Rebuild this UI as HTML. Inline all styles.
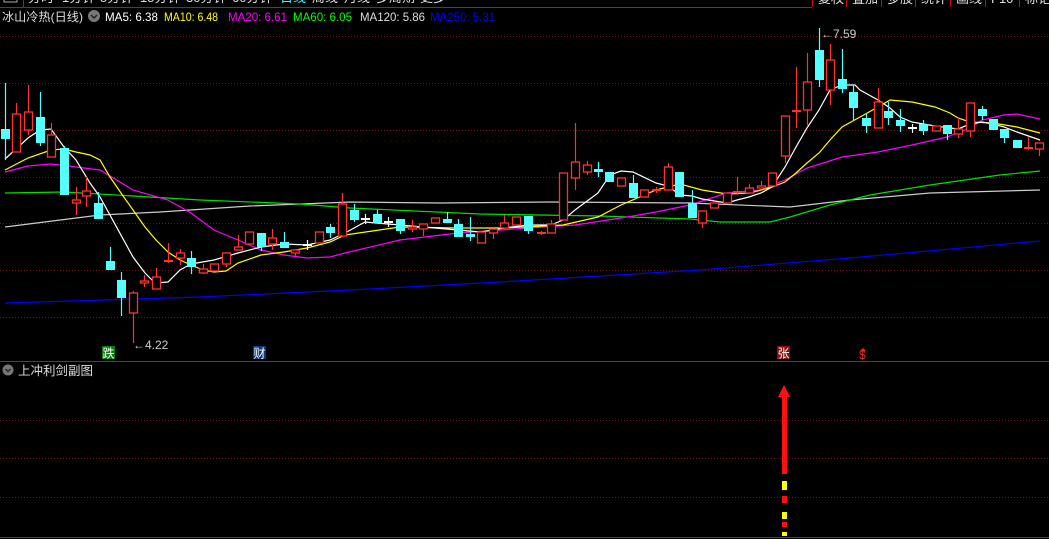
<!DOCTYPE html>
<html><head><meta charset="utf-8">
<style>
html,body{margin:0;padding:0;background:#000;width:1049px;height:539px;overflow:hidden}
svg{display:block}
text{font-family:"Liberation Sans","Noto Sans CJK SC",sans-serif}
</style></head>
<body>
<svg id="s" width="1049" height="539" xmlns="http://www.w3.org/2000/svg">
<rect width="1049" height="539" fill="#000"/>
<!-- top bar -->
<line x1="0" y1="7.5" x2="812" y2="7.5" stroke="#c01010" stroke-width="1"/>
<line x1="23.5" y1="0" x2="23.5" y2="7" stroke="#c01010"/>
<rect x="4" y="-4" width="13" height="6" fill="none" stroke="#aaa"/>
<g font-size="13" fill="#ddd">
<text x="28" y="2">分时</text><text x="62" y="2">1分钟</text><text x="100" y="2">5分钟</text><text x="140" y="2">15分钟</text><text x="186" y="2">30分钟</text><text x="232" y="2">60分钟</text>
<text x="280" y="2" fill="#3ff">日线</text><text x="312" y="2">周线</text><text x="344" y="2">月线</text><text x="376" y="2">多周期</text><text x="420" y="2">更多</text>
</g>
<g stroke="#c01010"><line x1="812.5" y1="0" x2="812.5" y2="7"/><line x1="846.5" y1="0" x2="846.5" y2="7"/><line x1="881.5" y1="0" x2="881.5" y2="7"/><line x1="915.5" y1="0" x2="915.5" y2="7"/><line x1="950.5" y1="0" x2="950.5" y2="7"/><line x1="985.5" y1="0" x2="985.5" y2="7"/><line x1="1019.5" y1="0" x2="1019.5" y2="7"/></g>
<g font-size="13" fill="#ddd"><text x="818" y="3">复权</text><text x="852" y="3">叠加</text><text x="887" y="3">多股</text><text x="921" y="3">统计</text><text x="956" y="3">画线</text><text x="991" y="3">F10</text><text x="1025" y="3">标记</text></g>
<!-- header -->
<g font-size="12">
<text x="2" y="21" fill="#ddd" textLength="81" lengthAdjust="spacingAndGlyphs">冰山冷热(日线)</text>
<circle cx="94" cy="16" r="6" fill="#777"/><path d="M91 15l3 3 3-3" stroke="#222" stroke-width="1.5" fill="none"/>
<text x="105" y="21" fill="#fff" textLength="53" lengthAdjust="spacingAndGlyphs">MA5: 6.38</text>
<text x="164" y="21" fill="#ff0" textLength="54" lengthAdjust="spacingAndGlyphs">MA10: 6.48</text>
<text x="228" y="21" fill="#f0f" textLength="59" lengthAdjust="spacingAndGlyphs">MA20: 6.61</text>
<text x="293" y="21" fill="#0f0" textLength="59" lengthAdjust="spacingAndGlyphs">MA60: 6.05</text>
<text x="360" y="21" fill="#ddd" textLength="65" lengthAdjust="spacingAndGlyphs">MA120: 5.86</text>
<text x="430" y="21" fill="#00f" textLength="65" lengthAdjust="spacingAndGlyphs">MA250: 5.31</text>
</g>
<!-- grid -->
<g stroke="#7a1212" stroke-dasharray="1 2" stroke-width="1">
<line x1="0" y1="36.5" x2="1049" y2="36.5"/><line x1="0" y1="83.5" x2="1049" y2="83.5"/><line x1="0" y1="130.5" x2="1049" y2="130.5"/><line x1="0" y1="177.5" x2="1049" y2="177.5"/><line x1="0" y1="223.5" x2="1049" y2="223.5"/><line x1="0" y1="270.5" x2="1049" y2="270.5"/><line x1="0" y1="317.5" x2="1049" y2="317.5"/>
<line x1="0" y1="420.5" x2="1049" y2="420.5"/><line x1="0" y1="458.5" x2="1049" y2="458.5"/><line x1="0" y1="497.5" x2="1049" y2="497.5"/>
</g>
<line x1="0" y1="361.5" x2="1049" y2="361.5" stroke="#c01010"/>
<line x1="0" y1="537.5" x2="1049" y2="537.5" stroke="#c01010"/>
<!-- MAs -->
<g fill="none" stroke-width="1.2">
<polyline stroke="#0000ff" points="5,303 200,297 350,290 500,282 700,270 850,258 1040,241"/>
<polyline stroke="#cccccc" points="5,227 100,215 160,212 250,206 350,202 440,203 550,202 690,203 790,207 850,200 930,193 1040,190"/>
<polyline stroke="#00e000" points="5,193 64,192 133,196 200,200 300,204 350,208 480,214 600,216 690,219 720,222 770,222 790,217 830,205 870,195 930,185 1000,175 1040,171"/>
<polyline stroke="#ff00ff" points="5,172 28,166 51,164 76,167 100,170 133,190 168,200 191,213 214,230 238,240 261,250 284,255 307,258 330,257 345,253 400,240 458,233 528,228 575,225 621,218 656,212 690,205 727,193 761,190 785,180 807,168 842,157 878,152 912,145 947,137 970,128 982,120 1004,115 1017,114 1040,119"/>
<polyline stroke="#ffff00" points="5,170 28,158 51,150 64,149 76,152 90,155 100,160 110,177 121,193 133,210 145,227 156,240 168,252 180,260 191,265 203,270 214,272 226,271 238,263 261,255 284,252 307,248 330,242 345,235 400,227 458,228 504,228 563,225 598,217 621,205 656,190 680,184 702,190 727,194 750,193 772,187 785,182 796,173 807,163 819,153 830,140 842,127 860,117 878,107 890,100 912,102 935,107 950,113 958,118 970,122 993,123 1017,127 1040,133"/>
<polyline stroke="#ffffff" points="5,159 28,138 40,130 51,129 64,147 76,160 90,183 100,197 133,257 145,273 155,283 168,282 180,270 191,264 214,260 238,253 261,247 284,244 307,245 330,240 345,233 365,222 388,224 423,227 458,230 481,232 504,228 528,225 551,225 563,220 575,210 598,193 610,175 621,171 633,172 656,183 668,186 680,195 692,196 702,199 727,203 737,200 749,197 761,193 772,187 785,167 796,147 807,128 819,110 830,90 842,85 855,85 860,90 878,100 890,108 900,117 912,122 935,126 958,129 970,124 982,122 993,124 1004,127 1017,132 1040,140"/>
</g>
<g id="c"></g>
<!-- labels -->
<text x="821" y="38" font-size="12" fill="#ccc">←7.59</text>
<text x="133" y="349" font-size="12" fill="#ccc">←4.22</text>
<rect x="102" y="346" width="13" height="13" fill="#0a7a0a"/><text x="102.5" y="357.5" font-size="12" fill="#fff">跌</text>
<rect x="253" y="346" width="13" height="13" fill="#0c3a78"/><text x="253.5" y="357.5" font-size="12" fill="#fff">财</text>
<rect x="777" y="346" width="13" height="13" fill="#8a0c0c"/><text x="777.5" y="357.5" font-size="12" fill="#fff">张</text>
<text x="859" y="359" font-size="12" fill="#f22">$</text><path d="M860 351l3-3 3 3z" fill="#f22"/>
<!-- sub panel -->
<circle cx="8" cy="370" r="5.5" fill="#777"/><path d="M5.5 369l2.5 2.5 2.5-2.5" stroke="#222" stroke-width="1.4" fill="none"/>
<text x="18" y="375" font-size="12.5" fill="#ddd">上冲利剑副图</text>
<path d="M778 397L784 385L790 397Z" fill="#ff1010"/>
<rect x="782" y="396" width="5" height="78" fill="#ff1010"/>
<rect x="782" y="481" width="5" height="9" fill="#ffff00"/>
<rect x="782" y="496" width="5" height="7" fill="#ff1010"/>
<rect x="782" y="512" width="5" height="7" fill="#ffff00"/>
<rect x="782" y="522" width="5" height="5" fill="#ff1010"/>
<rect x="782" y="532" width="5" height="4" fill="#ffff00"/>
</svg>
<script>
var d=[[5,129,139,83,160,'c'],[16,114,152,103,152,'r'],[28,112,130,85,135,'r'],[40,117,143,92,146,'c'],[51,135,157,123,157,'r'],[64,148,195,146,195,'c'],[76,200,203,187,215,'r'],[86,191,196,177,207,'r'],[98,203,219,192,219,'c'],[110,261,270,247,270,'c'],[121,280,298,272,316,'c'],[133,293,313,291,343,'r'],[144,281,283,275,287,'r'],[156,277,289,268,289,'r'],[168,261,262,243,263,'r'],[180,253,258,249,265,'r'],[191,258,267,251,274,'c'],[203,269,273,264,274,'r'],[214,264,271,264,271,'r'],[226,253,264,253,267,'r'],[238,247,250,235,250,'r'],[249,232,244,232,244,'r'],[261,233,247,233,251,'c'],[272,238,244,229,250,'r'],[284,242,248,232,248,'c'],[295,250,253,250,257,'r'],[307,245,245,240,250,'w'],[319,232,243,232,243,'r'],[330,227,233,224,238,'c'],
[342,204,236,193,236,'r'],[354,210,220,204,222,'c'],[365,219,219,214,224,'w'],[377,214,223,210,223,'c'],[388,222,222,217,227,'w'],[400,219,231,219,234,'c'],[412,227,229,220,232,'r'],[423,224,229,224,236,'r'],[435,218,223,218,223,'r'],[447,219,223,212,223,'c'],[458,224,237,219,237,'c'],[470,234,237,217,241,'c'],[481,232,243,232,243,'r'],[493,229,233,229,239,'r'],[504,223,228,215,228,'r'],[516,217,225,217,225,'r'],[528,216,231,216,234,'c'],[541,233,233,231,235,'r'],[551,224,233,220,233,'r'],[563,173,220,173,220,'r'],[575,162,178,123,190,'r'],[587,165,172,161,175,'r'],[598,169,172,162,177,'c'],[609,172,182,172,182,'c'],[621,178,186,178,186,'r'],[633,183,198,175,198,'c'],[644,190,197,190,197,'r'],[656,190,190,187,193,'r'],[668,167,190,163,190,'r'],[679,172,197,172,197,'c'],
[692,203,218,190,218,'c'],[702,211,223,211,228,'r'],[714,203,208,203,208,'r'],[727,193,203,193,203,'r'],[737,192,192,177,195,'r'],[749,188,193,184,193,'r'],[761,186,188,181,188,'r'],[772,173,186,173,186,'r'],[785,116,156,116,163,'r'],[796,111,111,67,128,'r'],[807,82,110,53,125,'r'],[819,50,80,28,87,'c'],[830,60,90,44,105,'r'],[842,79,89,49,93,'c'],[853,92,108,85,120,'c'],[866,118,126,113,133,'c'],[878,102,128,88,128,'r'],[888,111,118,102,125,'c'],[900,120,126,109,132,'c'],[912,128,128,124,133,'w'],[923,124,131,120,135,'c'],[936,126,131,126,131,'r'],[947,125,134,125,140,'c'],[958,129,134,117,138,'r'],[970,103,131,103,137,'r'],[982,109,116,106,120,'c'],[993,119,130,119,130,'c'],[1004,129,138,129,143,'c'],[1017,140,148,140,148,'c'],[1028,148,148,137,150,'r'],[1039,143,149,143,156,'r']];
var h='';
d.forEach(function(k){var x=k[0],t=k[1],b=k[2],hi=k[3],lo=k[4],ty=k[5];
var col=ty=='c'?'#55ffff':(ty=='w'?'#ffffff':'#ff3232');
h+='<line x1="'+(x+.5)+'" y1="'+hi+'" x2="'+(x+.5)+'" y2="'+lo+'" stroke="'+col+'" stroke-width="1.2"/>';
if(b-t<2){h+='<rect x="'+(x-4)+'" y="'+(t-1)+'" width="9" height="2" fill="'+col+'"/>';}
else if(ty=='c'){h+='<rect x="'+(x-4)+'" y="'+t+'" width="9" height="'+(b-t)+'" fill="'+col+'"/>';}
else{h+='<rect x="'+(x-3.5)+'" y="'+t+'" width="8" height="'+(b-t)+'" fill="#000" stroke="'+col+'" stroke-width="1.3"/>';}
});
document.getElementById('c').innerHTML=h;
</script>
</body></html>
